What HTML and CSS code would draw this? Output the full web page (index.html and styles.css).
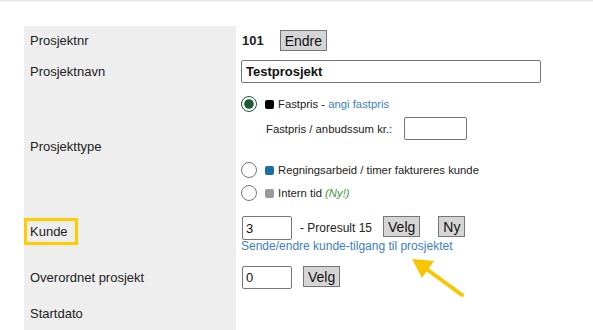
FILE: index.html
```html
<!DOCTYPE html>
<html lang="no">
<head>
  <meta charset="UTF-8" />
  <title>Prosjekt</title>
  <link rel="stylesheet" href="styles.css">
</head>
<body>
  <div class="topbar"></div>
  <div class="form">
    <div class="label">Prosjektnr</div>
    <div class="value row-nr">
      <b>101</b>
      <button type="button" class="btn btn-endre">Endre</button>
    </div>

    <div class="label">Prosjektnavn</div>
    <div class="value row-navn">
      <input type="text" class="name-input" value="Testprosjekt" />
    </div>

    <div class="label">Prosjekttype</div>
    <div class="value row-type">
      <label class="radio-line">
        <input type="radio" name="type" checked />
        <span class="dot dot-black"></span>
        <span>Fastpris - <a href="#">angi fastpris</a></span>
      </label>
      <div class="sub">
        <span class="sub-label">Fastpris / anbudssum kr.:</span>
        <input type="text" class="price-input" />
      </div>
      <label class="radio-line line-2">
        <input type="radio" name="type" />
        <span class="dot dot-blue"></span>
        <span>Regningsarbeid / timer faktureres kunde</span>
      </label>
      <label class="radio-line line-3">
        <input type="radio" name="type" />
        <span class="dot dot-grey"></span>
        <span>Intern tid <i class="new">(Ny!)</i></span>
      </label>
    </div>

    <div class="label"><span class="highlight">Kunde</span></div>
    <div class="value row-kunde">
      <div class="inline">
        <input type="text" class="small-input" value="3" />
        <span class="customer">- Proresult 15</span>
        <button type="button" class="btn btn-velg">Velg</button>
        <button type="button" class="btn btn-ny">Ny</button>
      </div>
      <a href="#" class="access-link">Sende/endre kunde-tilgang til prosjektet</a>
    </div>

    <div class="label">Overordnet prosjekt</div>
    <div class="value row-parent">
      <div class="inline">
        <input type="text" class="small-input" value="0" />
        <button type="button" class="btn btn-velg2">Velg</button>
      </div>
    </div>

    <div class="label">Startdato</div>
    <div class="value row-start"></div>
  </div>

  <svg class="arrow" width="70" height="54" viewBox="0 0 70 54">
    <line x1="57" y1="43" x2="16" y2="13" stroke="#f7c600" stroke-width="4" stroke-linecap="round" />
    <polygon points="7,7 29,9 17,26" fill="#f7c600" />
  </svg>
</body>
</html>
```

FILE: styles.css
```css
* {
  box-sizing: border-box;
}

body {
  margin: 0;
  font-family: "Liberation Sans", Arial, sans-serif;
  font-size: 13px;
  color: #222222;
  background: #ffffff;
  position: relative;
}

.topbar {
  height: 2px;
  background: linear-gradient(#e4e4e4, #f6f6f6);
}

.form {
  display: grid;
  grid-template-columns: 212px 1fr;
  margin: 24px 0 0 24px;
}

.label {
  background: #eeeeee;
  padding-left: 6px;
  display: flex;
  align-items: center;
}

.value {
  padding-left: 6px;
}

a {
  color: #3d7fc4;
  text-decoration: none;
}

.btn {
  font-family: inherit;
  font-size: 14px;
  color: #111111;
  background: #d5d5d5;
  border: 1px solid #767676;
  border-radius: 0;
  height: 21px;
  padding: 0 4px;
  line-height: 18px;
}

/* rows */
.row-nr {
  padding-top: 4px;
  padding-bottom: 4px;
  display: flex;
  align-items: center;
}

.btn-endre {
  margin-left: 16px;
}

.row-navn {
  padding-top: 5px;
  padding-bottom: 4px;
}

.name-input {
  width: 300px;
  height: 23px;
  font-family: inherit;
  font-size: 13px;
  font-weight: 700;
  color: #111111;
  border: 1px solid #767676;
  border-radius: 2px;
  padding: 2px 4px;
  margin-left: -1px;
}

.row-type {
  padding-top: 9px;
  padding-bottom: 4px;
  font-size: 11.3px;
}

.radio-line {
  display: flex;
  align-items: center;
  height: 16px;
}

.radio-line input {
  width: 16px;
  height: 16px;
  margin: 0 0 0 -1px;
  accent-color: #1f5a36;
}

.dot {
  width: 9px;
  height: 9px;
  border-radius: 2px;
  margin: 0 4px 0 8px;
}

.dot-black {
  background: #000000;
}

.dot-blue {
  background: #1c6fa5;
}

.dot-grey {
  background: #9a9a9a;
}

.new {
  color: #3a9a3a;
}

.sub {
  display: flex;
  align-items: center;
  margin-top: 5px;
  padding-left: 24px;
}

.sub-label {
  width: 138px;
}

.price-input {
  width: 63px;
  height: 23px;
  border: 1px solid #767676;
  border-radius: 2px;
}

.line-2 {
  margin-top: 22px;
}

.line-3 {
  margin-top: 7px;
}

.highlight {
  display: inline-block;
  border: 3px solid #ffcc00;
  padding: 3px 7px 3px 3px;
  margin-left: -6px;
}

.row-kunde {
  padding-top: 11px;
  padding-bottom: 4px;
}

.inline {
  display: flex;
  align-items: flex-start;
}

.small-input {
  width: 50px;
  height: 24px;
  font-family: inherit;
  font-size: 13px;
  color: #111111;
  border: 1px solid #767676;
  border-radius: 2px;
  padding: 2px 3px;
}

.customer {
  margin-left: 8px;
  font-size: 12px;
  line-height: 24px;
}

.btn-velg {
  margin-left: 11px;
}

.btn-ny {
  margin-left: 18px;
}

.access-link {
  display: block;
  font-size: 12px;
  line-height: 15px;
  margin-top: -1px;
  margin-left: -1px;
}

.row-parent {
  padding-top: 8px;
  padding-bottom: 7px;
}

.row-parent .small-input {
  height: 23px;
}

.btn-velg2 {
  margin-left: 11px;
}

.row-start {
  height: 34px;
}

.arrow {
  position: absolute;
  left: 405px;
  top: 252px;
}
```
